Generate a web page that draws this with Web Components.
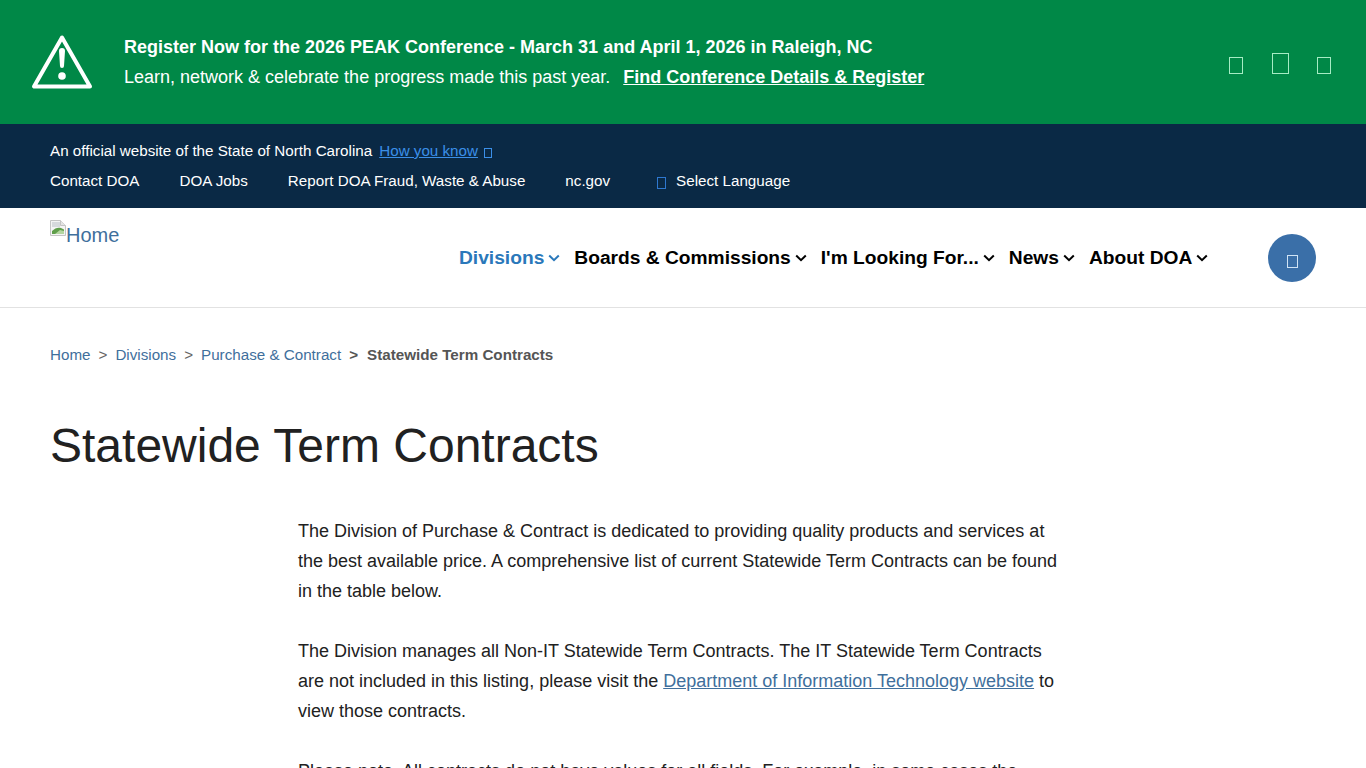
<!DOCTYPE html>
<html lang="en"><head><meta charset="utf-8"><title>Statewide Term Contracts</title>
<style>
html,body{margin:0;padding:0;height:768px;overflow:hidden;background:#fff}
body{font-family:"Liberation Sans",Arial,sans-serif;color:#212121}
</style></head><body>
<alert-banner></alert-banner>
<gov-bar></gov-bar>
<site-header></site-header>
<page-content></page-content>
<script>
function def(name,html){customElements.define(name,class extends HTMLElement{constructor(){super();this.attachShadow({mode:'open'}).innerHTML=html}})}
def('tofu-box',`<style>:host{display:inline-block;box-sizing:border-box;width:var(--w,8px);height:var(--h,11px);border:1px solid currentColor;flex:none}</style>`);
def('nav-item',`<style>:host{display:inline-flex;align-items:center;gap:4px;font:700 19.200px/24px "Liberation Sans",sans-serif;color:#000}
svg{width:12px;height:8px;display:block;margin-top:0}</style><slot></slot><svg viewBox="0 0 12 8" fill="none" stroke="currentColor" stroke-width="2"><path d="M1.200 1.500 6 6.200l4.800-4.700"/></svg>`);
def('alert-banner',`<style>:host{display:flex;box-sizing:border-box;height:124px;background:#008847;color:#fff;padding:0 30px 0 31px;align-items:center;font-size:18px;line-height:30px}
svg{width:62px;height:56px;display:block;flex:none;margin-top:-1px}
.t{margin-left:31px;flex:1;margin-top:-1px}
b{display:block}a{color:#fff;font-weight:700;text-decoration:underline;margin-left:8px}
.c{display:flex;align-items:flex-start;color:#a6ecc4;margin:7px 5px 0 0}
.c tofu-box:nth-child(1){--w:14px;--h:17px}
.c tofu-box:nth-child(2){--w:17px;--h:21px;margin:-4px 0 0 29px}
.c tofu-box:nth-child(3){--w:14px;--h:17px;margin:0 0 0 28px}</style>
<svg viewBox="0 0 62 56"><path d="M31 3.500 3 52.500h56z" fill="none" stroke="#fff" stroke-width="4" stroke-linejoin="round"/><path d="M28 17a3 3 0 0 1 6 0l-1 15a2 2 0 0 1-4 0z" fill="#fff"/><circle cx="31" cy="42" r="3.800" fill="#fff"/></svg>
<div class="t"><b>Register Now for the 2026 PEAK Conference - March 31 and April 1, 2026 in Raleigh, NC</b>Learn, network &amp; celebrate the progress made this past year. <a>Find Conference Details &amp; Register</a></div>
<div class="c"><tofu-box></tofu-box><tofu-box></tofu-box><tofu-box></tofu-box></div>`);
def('gov-bar',`<style>:host{display:flex;flex-direction:column;box-sizing:border-box;height:84px;background:#0a2945;color:#fff;padding:12px 50px 0;font-size:15.200px;line-height:30px}
.a{display:flex;align-items:center}.a a{color:#3b8fe8;text-decoration:underline;margin-left:7px}
.a tofu-box{--w:8px;--h:10px;color:#3b8fe8;margin:3px 0 0 6px}
.n{display:flex;align-items:center}.n span{margin-right:40px}.n tofu-box{--w:9px;--h:12px;color:#2e78d0;margin:3px 10px 0 7px}.n .l{margin:0}</style>
<div class="a">An official website of the State of North Carolina<a>How you know</a><tofu-box></tofu-box></div>
<div class="n"><span>Contact DOA</span><span>DOA Jobs</span><span>Report DOA Fraud, Waste &amp; Abuse</span><span>nc.gov</span><tofu-box></tofu-box><span class="l">Select Language</span></div>`);
def('site-header',`<style>:host{display:flex;box-sizing:border-box;height:100px;border-bottom:1px solid #e2e2e2;padding:0 50px;position:relative}
.logo{display:flex;align-items:flex-start;color:#3f6f9c;font-size:20px;line-height:24px;margin-top:12px;width:409px;flex:none}
.logo svg{width:16px;height:16px;flex:none}.logo span{margin-top:3px}
nav{display:flex;align-items:center;height:99px;gap:14px}
nav nav-item:first-child{color:#2a78ba}
.s{position:absolute;left:1268px;top:26px;width:48px;height:48px;border-radius:50%;background:#3a6fa8;color:#cfe3f5;display:flex;align-items:center;justify-content:center}
.s tofu-box{--w:11px;--h:13px;margin-top:6px}</style>
<div class="logo"><svg viewBox="0 0 16 16"><path d="M.5.500h10l5 5v10H.5z" fill="#f4f4f4" stroke="#c4c4c4"/><path d="M10.500.500v5h5" fill="#e4e4e4" stroke="#c4c4c4"/><path d="M2 2h8v5H2z" fill="#d6d9dc"/><path d="M2 14v-3c3-3 6-4 9-3l3 1.500V14z" fill="#5f9e4a"/><path d="M5 14l5-4 4 1v3z" fill="#b5d6a0"/></svg><span>Home</span></div>
<nav><nav-item>Divisions</nav-item><nav-item>Boards &amp; Commissions</nav-item><nav-item>I'm Looking For...</nav-item><nav-item>News</nav-item><nav-item>About DOA</nav-item></nav>
<div class="s"><tofu-box></tofu-box></div>`);
def('page-content',`<style>:host{display:block;padding:0 50px}
.b{display:flex;font-size:15.200px;line-height:20px;padding-top:37px;color:#3f6f9c;white-space:pre}
.b i{font-style:normal;color:#666;margin:0 8px}.b strong{color:#555}.b .g{font-weight:700;color:#555;margin-right:9px;margin-left:8px}
h1{font:400 48px/56px "Liberation Sans",sans-serif;color:#212121;margin:53px 0 0}
.m{margin:42px 0 0 248px;width:770px;font-size:18px;line-height:30px;color:#212121}
p{margin:0 0 30px}a{color:#3f6f9c;text-decoration:underline}</style>
<div class="b"><span>Home</span><i>&gt;</i><span>Divisions</span><i>&gt;</i><span>Purchase &amp; Contract</span><span class="g">&gt;</span><strong>Statewide Term Contracts</strong></div>
<h1>Statewide Term Contracts</h1>
<div class="m"><p>The Division of Purchase &amp; Contract is dedicated to providing quality products and services at the best available price. A comprehensive list of current Statewide Term Contracts can be found in the table below.</p>
<p>The Division manages all Non-IT Statewide Term Contracts. The IT Statewide Term Contracts are not included in this listing, please visit the <a>Department of Information Technology website</a> to view those contracts.</p>
<p>Please note, All contracts do not have values for all fields. For example, in some cases the</p></div>`);
</script>
</body></html>
